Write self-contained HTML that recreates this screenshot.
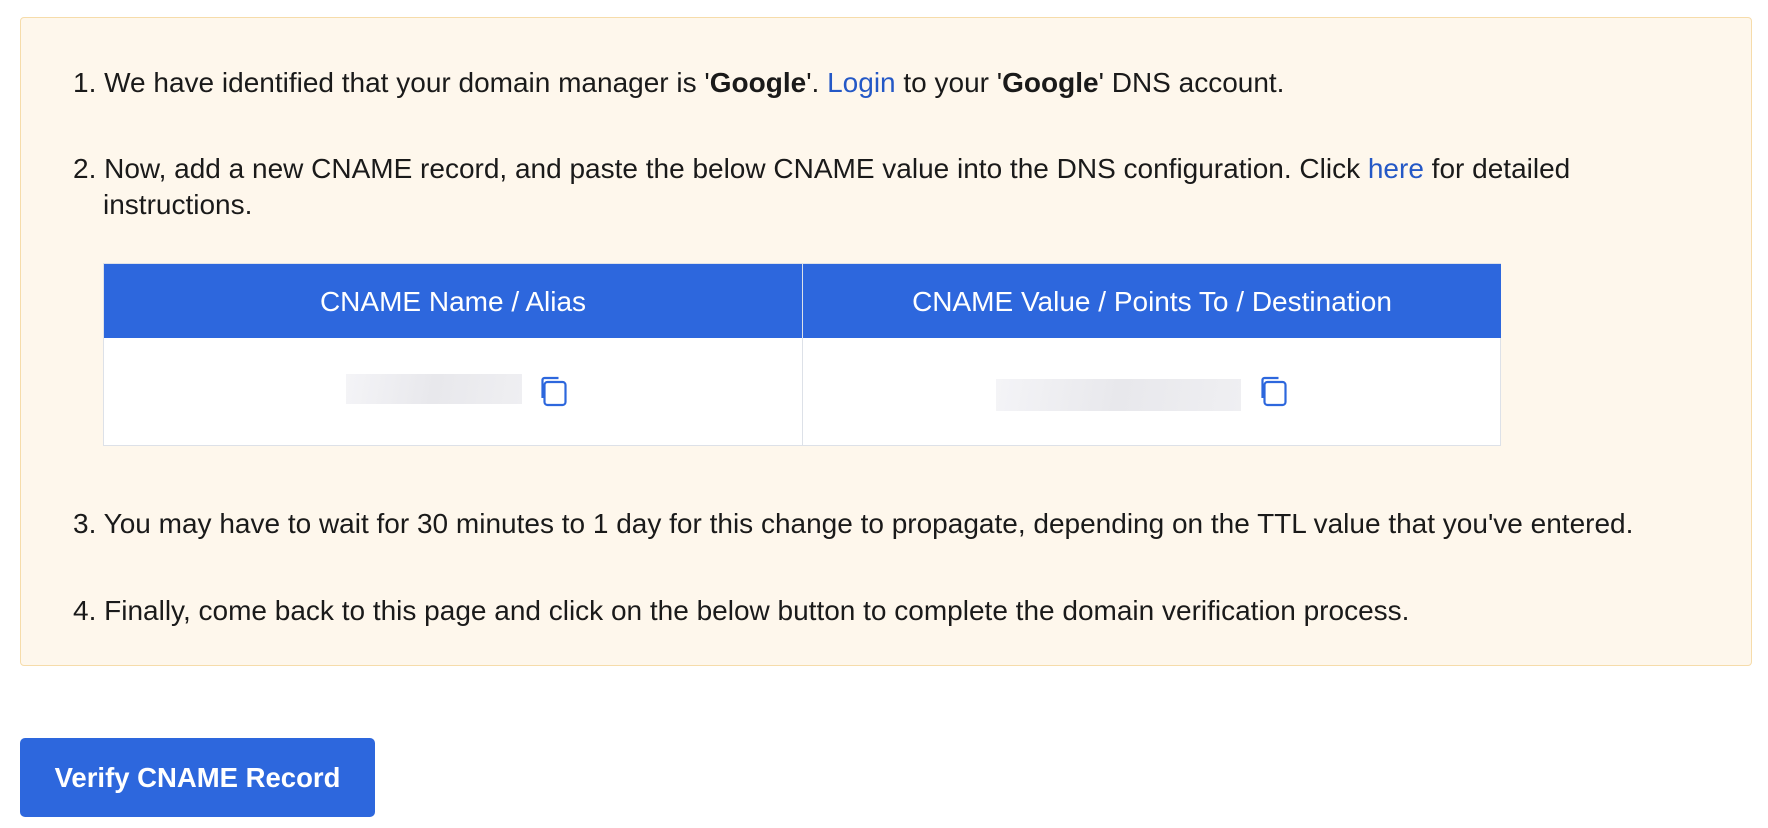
<!DOCTYPE html>
<html><head><style>
body{margin:0;width:1768px;height:828px;background:#fff;font-family:"Liberation Sans",sans-serif;color:#1a1a1a;position:relative;overflow:hidden}
.box{position:absolute;left:20px;top:17px;width:1730px;height:647px;background:#fef7ec;border:1px solid #f6dcaa;border-radius:4px}
.t{position:absolute;left:73px;font-size:28px;white-space:nowrap;line-height:36px}
a{color:#2458c6;text-decoration:none}
.tbl{position:absolute;left:103px;top:263px;width:1398px;height:183px;border:1px solid #dde1e8;background:#fff;box-sizing:border-box}
.hd{position:absolute;top:0;height:74px;background:#2d67dd;color:#fff;font-size:28px;line-height:76px;text-align:center}
.ph{position:absolute;background:linear-gradient(100deg,#f4f4f7,#e8e8ec 50%,#efeff2)}
.btn{position:absolute;left:20px;top:738px;width:355px;height:79px;background:#2d67dd;border-radius:5px;color:#fff;font-weight:bold;font-size:27.5px;line-height:79px;text-align:center}
</style></head><body>
<div class="box"></div>
<div class="t" style="top:65px">1. We have identified that your domain manager is '<b>Google</b>'. <a>Login</a> to your '<b>Google</b>' DNS account.</div>
<div class="t" style="top:151px">2. Now, add a new CNAME record, and paste the below CNAME value into the DNS configuration. Click <a>here</a> for detailed</div>
<div class="t" style="top:187px;left:103px">instructions.</div>
<div class="tbl">
<div class="hd" style="left:0;width:698px">CNAME Name / Alias</div>
<div class="hd" style="left:699px;width:698px">CNAME Value / Points To / Destination</div>
<div style="position:absolute;left:698px;top:0;width:1px;height:181px;background:#dde1e8"></div>
</div>
<div class="ph" style="left:346px;top:374px;width:176px;height:30px"></div>
<div class="ph" style="left:996px;top:379px;width:245px;height:32px"></div>
<svg style="position:absolute;left:538px;top:376px" width="31" height="32" viewBox="0 0 30 32" fill="none" stroke="#2d67dd" stroke-width="2.2"><path d="M4 22V4a2 2 0 0 1 2-2h14"/><rect x="6" y="6" width="21" height="23" rx="3"/></svg>
<svg style="position:absolute;left:1258px;top:376px" width="31" height="32" viewBox="0 0 30 32" fill="none" stroke="#2d67dd" stroke-width="2.2"><path d="M4 22V4a2 2 0 0 1 2-2h14"/><rect x="6" y="6" width="21" height="23" rx="3"/></svg>
<div class="t" style="top:506px">3. You may have to wait for 30 minutes to 1 day for this change to propagate, depending on the TTL value that you've entered.</div>
<div class="t" style="top:593px">4. Finally, come back to this page and click on the below button to complete the domain verification process.</div>
<div class="btn">Verify CNAME Record</div>
</body></html>
